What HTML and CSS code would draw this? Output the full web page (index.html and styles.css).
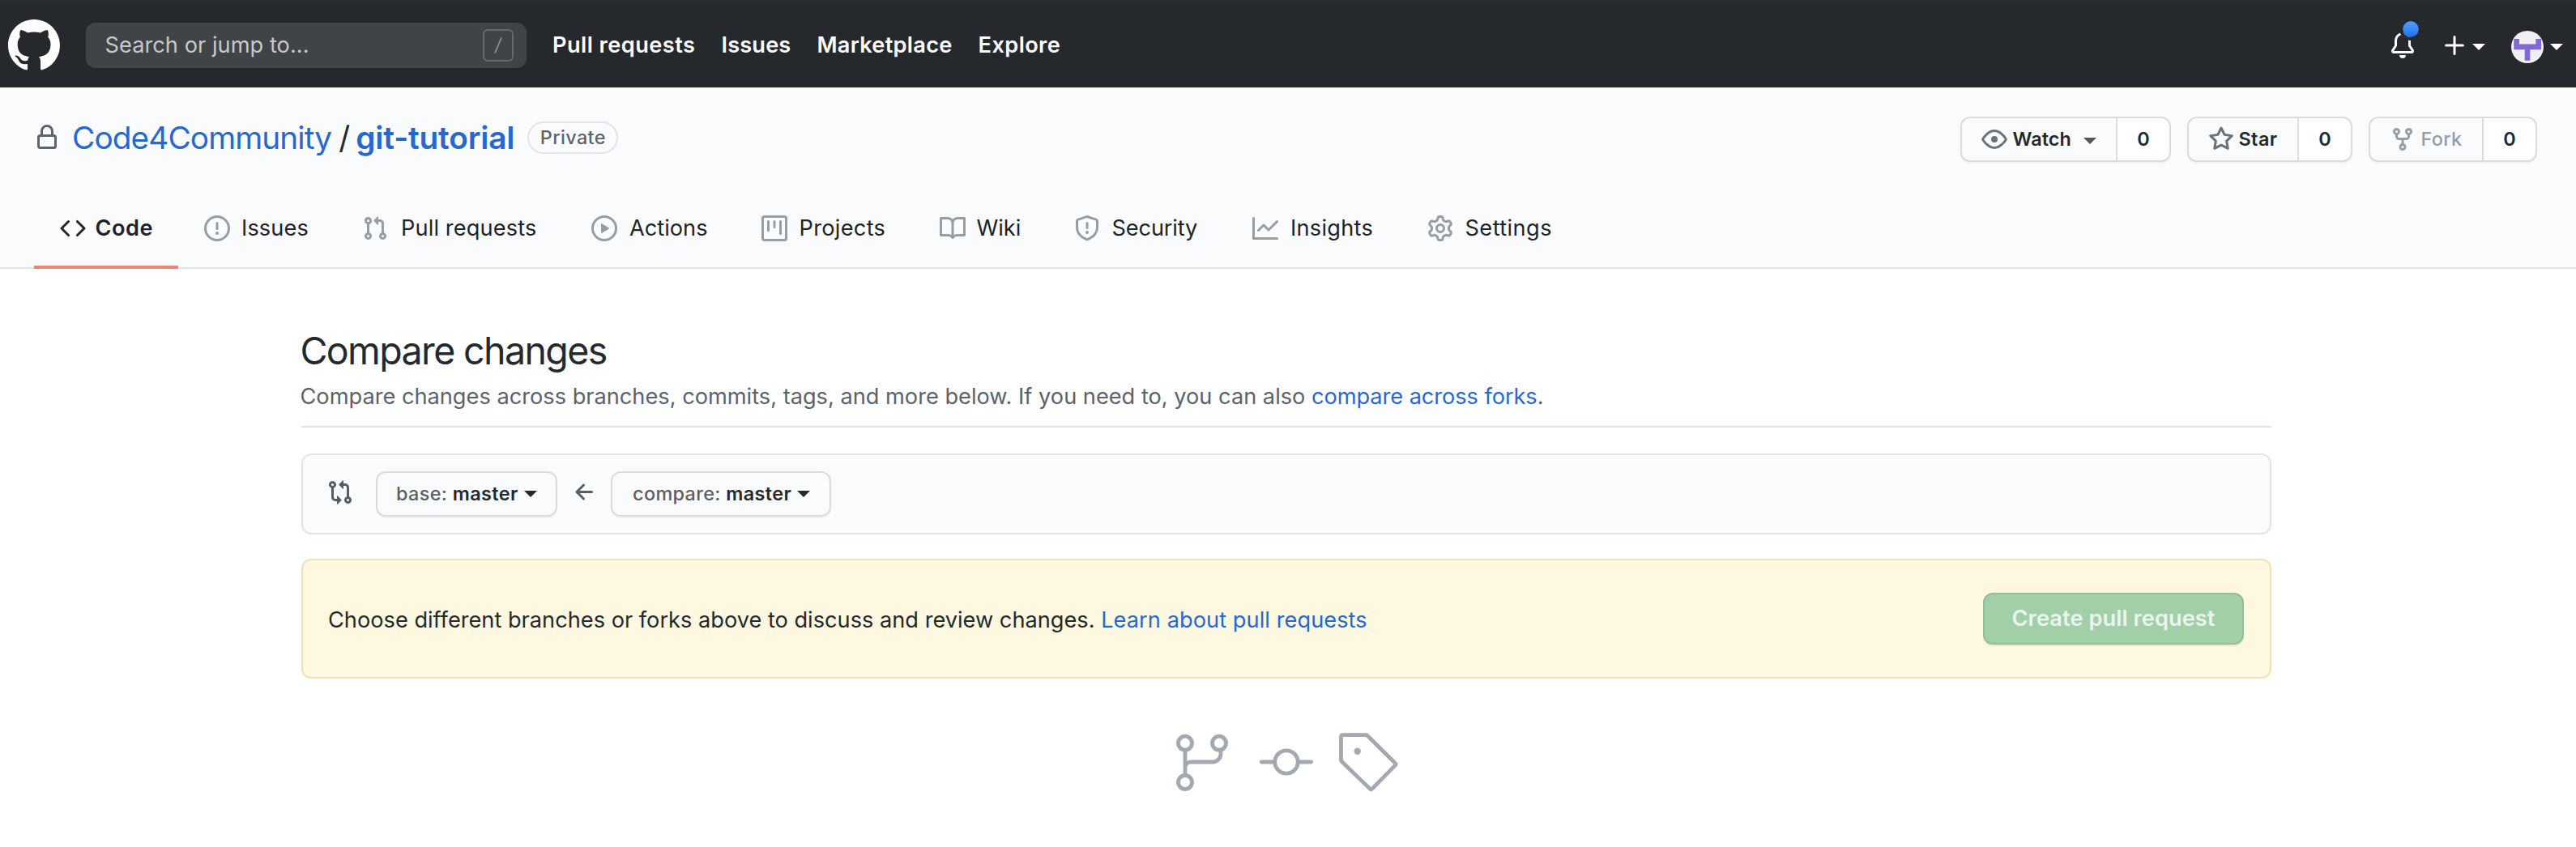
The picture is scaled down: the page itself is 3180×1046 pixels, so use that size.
FILE: index.html
```html
<!DOCTYPE html>
<html lang="en">
<head>
<meta charset="utf-8">
<title>Comparing master...master · Code4Community/git-tutorial</title>
<link rel="stylesheet" href="styles.css">
</head>
<body>
<header class="topbar">
  <a class="logo"><svg width="64" height="64" viewBox="0 0 16 16"><path d="M8 0C3.58 0 0 3.58 0 8c0 3.54 2.29 6.53 5.47 7.59.4.07.55-.17.55-.38 0-.19-.01-.82-.01-1.49-2.01.37-2.53-.49-2.69-.94-.09-.23-.48-.94-.82-1.13-.28-.15-.68-.52-.01-.53.63-.01 1.08.58 1.23.82.72 1.21 1.87.87 2.33.66.07-.52.28-.87.51-1.07-1.78-.2-3.64-.89-3.64-3.95 0-.87.31-1.59.82-2.15-.08-.2-.36-1.02.08-2.12 0 0 .67-.21 2.2.82.64-.18 1.32-.27 2-.27.68 0 1.36.09 2 .27 1.53-1.04 2.2-.82 2.2-.82.44 1.1.16 1.92.08 2.12.51.56.82 1.27.82 2.15 0 3.07-1.87 3.75-3.65 3.95.29.25.54.73.54 1.48 0 1.07-.01 1.93-.01 2.2 0 .21.15.46.55.38A8.013 8.013 0 0016 8c0-4.42-3.58-8-8-8z"/></svg></a>
  <div class="search">
    <span class="search-text">Search or jump to...</span>
    <span class="slash-key"><svg width="14" height="24" viewBox="0 0 14 24"><path d="M3 21.5 11 2.5" fill="none" stroke="currentColor" stroke-width="1.9"/></svg></span>
  </div>
  <nav class="topnav">
    <a class="nav-pulls">Pull requests</a>
    <a class="nav-issues">Issues</a>
    <a class="nav-market">Marketplace</a>
    <a class="nav-explore">Explore</a>
  </nav>
  <div class="top-actions">
    <a class="bell">
      <svg width="32" height="32" viewBox="0 0 16 16"><path d="M8 16a2 2 0 001.985-1.75c.017-.137-.097-.25-.235-.25h-3.5c-.138 0-.252.113-.235.25A2 2 0 008 16z"/><path fill-rule="evenodd" d="M8 1.5A3.5 3.5 0 004.5 5v2.947c0 .346-.102.683-.294.97l-1.703 2.556a.018.018 0 00-.003.01l.001.006c0 .002.002.004.004.006a.017.017 0 00.006.004l.007.001h10.964l.007-.001a.016.016 0 00.006-.004.016.016 0 00.004-.006l.001-.007a.017.017 0 00-.003-.01l-1.703-2.554a1.75 1.75 0 01-.294-.97V5A3.5 3.5 0 008 1.5zM3 5a5 5 0 0110 0v2.947c0 .05.015.098.042.139l1.703 2.555A1.518 1.518 0 0113.482 13H2.518a1.518 1.518 0 01-1.263-2.36l1.703-2.554A.25.25 0 003 7.947V5z"/></svg>
      <span class="unread"></span>
    </a>
    <a class="add-menu">
      <svg width="24" height="24" viewBox="0 0 24 24"><path d="M12 1.6V22.4M1.6 12H22.4" fill="none" stroke="currentColor" stroke-width="3" stroke-linecap="round"/></svg>
      <span class="caret"></span>
    </a>
    <a class="user-menu">
      <svg width="40" height="40" viewBox="0 0 40 40"><circle cx="20" cy="20" r="20" fill="#f0f0f0"/><path d="M3.3 10H10v6.6h20.3V10H37v13.3H23.3v13.4h-6.6V23.3H3.3z" fill="#8267d8"/></svg>
      <span class="caret"></span>
    </a>
  </div>
</header>

<section class="repohead">
  <div class="repo-row">
    <div class="repo-title">
      <svg class="lock" width="32" height="32" viewBox="0 0 16 16"><path fill-rule="evenodd" d="M4 4v2h-.25A1.75 1.75 0 002 7.75v5.5c0 .966.784 1.75 1.75 1.75h8.5A1.75 1.75 0 0014 13.25v-5.5A1.75 1.75 0 0012.25 6H12V4a4 4 0 10-8 0zm6.5 2V4a2.5 2.5 0 00-5 0v2h5zM12 7.5h.25a.25.25 0 01.25.25v5.5a.25.25 0 01-.25.25h-8.5a.25.25 0 01-.25-.25v-5.5a.25.25 0 01.25-.25H12z"/></svg>
      <a class="owner">Code4Community</a>
      <span class="sep">/</span>
      <a class="repo">git-tutorial</a>
      <span class="label">Private</span>
    </div>
    <div class="repo-buttons">
      <div class="btn-group watch">
        <span class="btn-main"><svg width="32" height="32" viewBox="0 0 16 16"><path fill-rule="evenodd" d="M1.679 7.932c.412-.621 1.242-1.75 2.366-2.717C5.175 4.242 6.527 3.5 8 3.5c1.473 0 2.824.742 3.955 1.715 1.124.967 1.954 2.096 2.366 2.717a.119.119 0 010 .136c-.412.621-1.242 1.75-2.366 2.717C10.825 11.758 9.473 12.5 8 12.5c-1.473 0-2.824-.742-3.955-1.715C2.92 9.818 2.09 8.69 1.679 8.068a.119.119 0 010-.136zM8 2c-1.981 0-3.67.992-4.933 2.078C1.797 5.169.88 6.423.43 7.1a1.619 1.619 0 000 1.798c.45.678 1.367 1.932 2.637 3.024C4.329 13.008 6.019 14 8 14c1.981 0 3.67-.992 4.933-2.078 1.27-1.091 2.187-2.345 2.637-3.023a1.619 1.619 0 000-1.798c-.45-.678-1.367-1.932-2.637-3.023C11.671 2.992 9.981 2 8 2zm0 8a2 2 0 100-4 2 2 0 000 4z"/></svg><span class="btn-text">Watch</span><span class="caret"></span></span>
        <span class="count">0</span>
      </div>
      <div class="btn-group star">
        <span class="btn-main"><svg width="32" height="32" viewBox="0 0 16 16"><path fill-rule="evenodd" d="M8 .25a.75.75 0 01.673.418l1.882 3.815 4.21.612a.75.75 0 01.416 1.279l-3.046 2.97.719 4.192a.75.75 0 01-1.088.791L8 12.347l-3.766 1.98a.75.75 0 01-1.088-.79l.72-4.194L.818 6.374a.75.75 0 01.416-1.28l4.21-.611L7.327.668A.75.75 0 018 .25zm0 2.445L6.615 5.5a.75.75 0 01-.564.41l-3.097.45 2.24 2.184a.75.75 0 01.216.664l-.528 3.084 2.769-1.456a.75.75 0 01.698 0l2.77 1.456-.53-3.084a.75.75 0 01.216-.664l2.24-2.183-3.096-.45a.75.75 0 01-.564-.41L8 2.694v.001z"/></svg><span class="btn-text">Star</span></span>
        <span class="count">0</span>
      </div>
      <div class="btn-group fork">
        <span class="btn-main"><svg width="32" height="32" viewBox="0 0 16 16"><path fill-rule="evenodd" d="M5 3.25a.75.75 0 11-1.5 0 .75.75 0 011.5 0zm0 2.122a2.25 2.25 0 10-1.5 0v.878A2.25 2.25 0 005.75 8.5h1.5v2.128a2.251 2.251 0 101.5 0V8.5h1.5a2.25 2.25 0 002.25-2.25v-.878a2.25 2.25 0 10-1.5 0v.878a.75.75 0 01-.75.75h-4.5A.75.75 0 015 6.25v-.878zm3.75 7.378a.75.75 0 11-1.5 0 .75.75 0 011.5 0zm3-8.75a.75.75 0 100-1.5.75.75 0 000 1.5z"/></svg><span class="btn-text">Fork</span></span>
        <span class="count">0</span>
      </div>
    </div>
  </div>
  <nav class="tabs">
    <a class="tab tab-code"><svg width="32" height="32" viewBox="0 0 16 16"><path d="M4.72 3.22a.75.75 0 011.06 1.06L2.06 8l3.72 3.72a.75.75 0 11-1.06 1.06L.47 8.53a.75.75 0 010-1.06l4.25-4.25zm6.56 0a.75.75 0 10-1.06 1.06L13.94 8l-3.72 3.72a.75.75 0 101.06 1.06l4.25-4.25a.75.75 0 000-1.06l-4.25-4.25z"/></svg><span>Code</span></a>
    <a class="tab tab-issues"><svg width="32" height="32" viewBox="0 0 16 16"><circle cx="8" cy="8" r="7.25" fill="none" stroke="currentColor" stroke-width="1.5"/><path d="M8 4.75v3.5" stroke="currentColor" stroke-width="1.5" stroke-linecap="round"/><circle cx="8" cy="11" r="1"/></svg><span>Issues</span></a>
    <a class="tab tab-pulls"><svg width="32" height="32" viewBox="0 0 16 16"><path fill-rule="evenodd" d="M7.177 3.073L9.573.677A.25.25 0 0110 .854v4.792a.25.25 0 01-.427.177L7.177 3.427a.25.25 0 010-.354zM3.75 2.5a.75.75 0 100 1.5.75.75 0 000-1.5zm-2.25.75a2.25 2.25 0 113 2.122v5.256a2.251 2.251 0 11-1.5 0V5.372A2.25 2.25 0 011.5 3.25zM11 2.5h-1V4h1a1 1 0 011 1v5.628a2.251 2.251 0 101.5 0V5A2.5 2.5 0 0011 2.5zm1 10.25a.75.75 0 111.5 0 .75.75 0 01-1.5 0zM3.75 12a.75.75 0 100 1.5.75.75 0 000-1.5z"/></svg><span>Pull requests</span></a>
    <a class="tab tab-actions"><svg width="32" height="32" viewBox="0 0 16 16"><circle cx="8" cy="8" r="7.25" fill="none" stroke="currentColor" stroke-width="1.5"/><path d="M6 5.2v5.6a.25.25 0 00.38.22l4.5-2.8a.25.25 0 000-.43l-4.5-2.8A.25.25 0 006 5.2z"/></svg><span>Actions</span></a>
    <a class="tab tab-projects"><svg width="32" height="32" viewBox="0 0 16 16"><path fill-rule="evenodd" d="M1.75 0A1.75 1.75 0 000 1.75v12.5C0 15.216.784 16 1.75 16h12.5A1.75 1.75 0 0016 14.25V1.75A1.75 1.75 0 0014.25 0H1.75zM1.5 1.75a.25.25 0 01.25-.25h12.5a.25.25 0 01.25.25v12.5a.25.25 0 01-.25.25H1.75a.25.25 0 01-.25-.25V1.75zM11.75 3a.75.75 0 00-.75.75v7.5a.75.75 0 001.5 0v-7.5a.75.75 0 00-.75-.75zm-8.25.75a.75.75 0 011.5 0v5.5a.75.75 0 01-1.5 0v-5.5zM8 3a.75.75 0 00-.75.75v3.5a.75.75 0 001.5 0v-3.5A.75.75 0 008 3z"/></svg><span>Projects</span></a>
    <a class="tab tab-wiki"><svg width="32" height="32" viewBox="0 0 16 16"><path fill-rule="evenodd" d="M0 1.75A.75.75 0 01.75 1h4.253c1.227 0 2.317.59 3 1.501A3.744 3.744 0 0111.006 1h4.245a.75.75 0 01.75.75v10.5a.75.75 0 01-.75.75h-4.507a2.25 2.25 0 00-1.591.659l-.622.621a.75.75 0 01-1.06 0l-.622-.621A2.25 2.25 0 005.258 13H.75a.75.75 0 01-.75-.75V1.75zm8.755 3a2.25 2.25 0 012.25-2.25H14.5v9h-3.757c-.71 0-1.4.201-1.992.572l.004-7.322zm-1.504 7.324l.004-5.073-.002-2.253A2.25 2.25 0 005.003 2.5H1.5v9h3.757a3.75 3.75 0 011.994.574z"/></svg><span>Wiki</span></a>
    <a class="tab tab-security"><svg width="32" height="32" viewBox="0 0 16 16"><path fill-rule="evenodd" d="M7.467.133a1.75 1.75 0 011.066 0l5.25 1.68A1.75 1.75 0 0115 3.48V7c0 1.566-.32 3.182-1.303 4.682-.983 1.498-2.585 2.813-5.032 3.855a1.7 1.7 0 01-1.33 0c-2.447-1.042-4.049-2.357-5.032-3.855C1.32 10.182 1 8.566 1 7V3.48a1.75 1.75 0 011.217-1.667l5.25-1.68zm.61 1.429a.25.25 0 00-.153 0l-5.25 1.68a.25.25 0 00-.174.238V7c0 1.358.275 2.666 1.057 3.86.784 1.194 2.121 2.34 4.366 3.297a.2.2 0 00.154 0c2.245-.956 3.582-2.104 4.366-3.298C13.225 9.666 13.5 8.36 13.5 7V3.48a.25.25 0 00-.174-.237l-5.25-1.68zM9 10.5a1 1 0 11-2 0 1 1 0 012 0zm-.25-5.75a.75.75 0 10-1.5 0v3a.75.75 0 001.5 0v-3z"/></svg><span>Security</span></a>
    <a class="tab tab-insights"><svg width="32" height="32" viewBox="0 0 16 16"><path d="M1.5 1.75a.75.75 0 00-1.5 0v12.5c0 .414.336.75.75.75h14.5a.75.75 0 000-1.5H1.5V1.75zm14.28 2.53a.75.75 0 00-1.06-1.06L10 7.94 7.53 5.47a.75.75 0 00-1.06 0L3.22 8.72a.75.75 0 001.06 1.06L7 7.06l2.47 2.47a.75.75 0 001.06 0l5.25-5.25z"/></svg><span>Insights</span></a>
    <a class="tab tab-settings"><svg width="32" height="32" viewBox="0 0 16 16"><path fill-rule="evenodd" d="M7.429 1.525a6.593 6.593 0 011.142 0c.036.003.108.036.137.146l.289 1.105c.147.56.55.967.997 1.189.174.086.341.183.501.29.417.278.97.423 1.53.27l1.102-.303c.11-.03.175.016.195.046.219.31.41.641.573.989.014.031.022.11-.059.19l-.815.806c-.411.406-.562.957-.53 1.456a4.588 4.588 0 010 .582c-.032.499.119 1.05.53 1.456l.815.806c.08.08.073.159.059.19a6.494 6.494 0 01-.573.99c-.02.029-.086.074-.195.045l-1.103-.303c-.559-.153-1.112-.008-1.529.27-.16.107-.327.204-.5.29-.449.222-.851.628-.998 1.189l-.289 1.105c-.029.11-.101.143-.137.146a6.613 6.613 0 01-1.142 0c-.036-.003-.108-.037-.137-.146l-.289-1.105c-.147-.56-.55-.967-.997-1.189a4.502 4.502 0 01-.501-.29c-.417-.278-.97-.423-1.53-.27l-1.102.303c-.11.03-.175-.016-.195-.046a6.492 6.492 0 01-.573-.989c-.014-.031-.022-.11.059-.19l.815-.806c.411-.406.562-.957.53-1.456a4.587 4.587 0 010-.582c.032-.499-.119-1.05-.53-1.456l-.815-.806c-.08-.08-.073-.159-.059-.19a6.44 6.44 0 01.573-.99c.02-.029.086-.075.195-.045l1.103.303c.559.153 1.112.008 1.529-.27.16-.107.327-.204.5-.29.449-.222.851-.628.998-1.189l.289-1.105c.029-.11.101-.143.137-.146zM8 0c-.236 0-.47.01-.701.03-.743.065-1.29.615-1.458 1.261l-.29 1.106c-.017.066-.078.158-.211.224a5.994 5.994 0 00-.668.386c-.123.082-.233.09-.3.071L3.27 2.776c-.644-.177-1.392.02-1.82.63a7.977 7.977 0 00-.704 1.217c-.315.675-.111 1.422.363 1.891l.815.806c.05.048.098.147.088.294a6.084 6.084 0 000 .772c.01.147-.038.246-.088.294l-.815.806c-.474.469-.678 1.216-.363 1.891.2.428.436.835.704 1.218.428.609 1.176.806 1.82.63l1.103-.303c.066-.019.176-.011.299.071.213.143.436.272.668.386.133.066.194.158.212.224l.289 1.106c.169.646.715 1.196 1.458 1.26a8.094 8.094 0 001.402 0c.743-.064 1.29-.614 1.458-1.26l.29-1.106c.017-.066.078-.158.211-.224a5.98 5.98 0 00.668-.386c.123-.082.233-.09.3-.071l1.102.302c.644.177 1.392-.02 1.82-.63.268-.382.505-.789.704-1.217.315-.675.111-1.422-.364-1.891l-.814-.806c-.05-.048-.098-.147-.088-.294a6.1 6.1 0 000-.772c-.01-.147.039-.246.088-.294l.814-.806c.475-.469.679-1.216.364-1.891a7.992 7.992 0 00-.704-1.218c-.428-.609-1.176-.806-1.82-.63l-1.103.303c-.066.019-.176.011-.299-.071a5.991 5.991 0 00-.668-.386c-.133-.066-.194-.158-.212-.224L10.16 1.29C9.99.645 9.444.095 8.701.031A8.094 8.094 0 008 0zm1.5 8a1.5 1.5 0 11-3 0 1.5 1.5 0 013 0zM11 8a3 3 0 11-6 0 3 3 0 016 0z"/></svg><span>Settings</span></a>
  </nav>
</section>

<main class="content">
  <div class="subhead">
    <h1>Compare changes</h1>
    <p>Compare changes across branches, commits, tags, and more below. If you need to, you can also <a>compare across forks</a>.</p>
  </div>

  <div class="range">
    <svg class="range-icon" width="32" height="32" viewBox="0 0 16 16"><path fill-rule="evenodd" d="M9.573.677L7.177 3.073a.25.25 0 000 .354l2.396 2.396A.25.25 0 0010 5.646V4h1a1 1 0 011 1v5.628a2.251 2.251 0 101.5 0V5A2.5 2.5 0 0011 2.5h-1V.854a.25.25 0 00-.427-.177zM6 12v-1.646a.25.25 0 01.427-.177l2.396 2.396a.25.25 0 010 .354l-2.396 2.396A.25.25 0 016 15.146V13.5H5A2.5 2.5 0 012.5 11V5.372a2.25 2.25 0 111.5 0V11a1 1 0 001 1h1zm6.75 0a.75.75 0 100 1.5.75.75 0 000-1.5zM4 3.25a.75.75 0 11-1.5 0 .75.75 0 011.5 0z"/></svg>
    <button class="ref base"><span class="ref-kind">base:</span><span class="ref-name">master</span><span class="caret"></span></button>
    <svg class="arrow" width="32" height="32" viewBox="0 0 16 16"><path d="M7.78 12.53a.75.75 0 01-1.06 0L2.47 8.28a.75.75 0 010-1.06l4.25-4.25a.75.75 0 011.06 1.06L4.81 7h7.44a.75.75 0 010 1.5H4.81l2.97 2.97a.75.75 0 010 1.06z"/></svg>
    <button class="ref head"><span class="ref-kind">compare:</span><span class="ref-name">master</span><span class="caret"></span></button>
  </div>

  <div class="notice">
    <p>Choose different branches or forks above to discuss and review changes. <a>Learn about pull requests</a></p>
    <button class="create" disabled>Create pull request</button>
  </div>

  <div class="blank-icons">
    <svg width="65" height="74" viewBox="0 0 65 74"><circle cx="11" cy="12.7" r="8.5"/><circle cx="53" cy="12.7" r="8.5"/><circle cx="11" cy="61" r="8.5"/><path d="M11 21.5V52M55 21.5V26a10 10 0 0 1-10 10H18a7 7 0 0 0-7 7"/></svg>
    <svg width="66" height="74" viewBox="0 0 66 74"><circle cx="33" cy="36" r="14.2"/><path d="M2.4 36H18M48 36h15.6"/></svg>
    <svg width="74" height="74" viewBox="0 0 74 74"><path d="M5.5 2.7H34.5a1.8 1.8 0 0 1 1.3.6L70.6 37.7a1.4 1.4 0 0 1 0 2.2L41.6 69.4a1.5 1.5 0 0 1-2.2 0L4.1 35.2a1.8 1.8 0 0 1-.6-1.3V4.5a1.8 1.8 0 0 1 2-1.8z"/><circle class="dot" cx="23.7" cy="22.7" r="4.2"/></svg>
  </div>
</main>
</body>
</html>
```
FILE: styles.css
```css
* { box-sizing: border-box; }
body {
  margin: 0;
  background: #fff;
  color: #24292e;
  font: 400 27.2px/42px Inter, "Liberation Sans", sans-serif;
}
svg { display: block; flex: none; fill: currentColor; }
h1, p { margin: 0; }
a { color: #2768cf; text-decoration: none; white-space: nowrap; }
button { font: inherit; margin: 0; padding: 0; }
.caret {
  flex: none;
  width: 0;
  height: 0;
  border: 8px solid transparent;
  border-top-color: currentColor;
  border-bottom: 0;
}

/* Top bar */
.topbar {
  display: flex;
  align-items: center;
  height: 108px;
  padding: 4px 16px 0 10px;
  background: #25292e;
  box-shadow: inset 0 3px 0 #2a2a2a;
  color: #fff;
}
.topbar a { color: #fff; }
.search {
  display: flex;
  align-items: center;
  justify-content: space-between;
  width: 544px;
  height: 56px;
  margin-left: 32px;
  padding: 0 16px 0 23.5px;
  border-radius: 12px;
  background: #404448;
}
.search-text { color: #c8c9cb; letter-spacing: .04px; }
.slash-key {
  display: flex;
  align-items: center;
  justify-content: center;
  width: 38px;
  height: 40px;
  border: 2px solid #65696c;
  border-radius: 6px;
  color: #8b8e91;
}
.topnav { display: flex; gap: 32px; margin-left: 32px; font-weight: 600; }
.nav-pulls { letter-spacing: .46px; }
.nav-issues { letter-spacing: .16px; }
.nav-market { letter-spacing: .28px; }
.nav-explore { letter-spacing: .39px; }
.top-actions { display: flex; align-items: center; margin-left: auto; }
.bell { position: relative; }
.unread {
  position: absolute;
  left: 12px;
  top: -18px;
  width: 28px;
  height: 28px;
  border: 4px solid #25292e;
  border-radius: 50%;
  background: linear-gradient(#54a0ff, #1f6feb) padding-box;
}
.add-menu { display: flex; align-items: center; gap: 10px; margin-left: 36px; }
.add-menu .caret, .user-menu .caret { position: relative; top: 2px; }
.user-menu { display: flex; align-items: center; gap: 8px; margin-left: 32px; }
.user-menu svg { margin-top: 4px; }

/* Repository header */
.repohead { height: 224px; background: #fafbfd; border-bottom: 2px solid #e1e4e8; }
.repo-row { display: flex; justify-content: space-between; height: 124px; padding: 36px 48px 0 42px; }
.repo-title { display: flex; align-items: center; height: 52px; font-size: 38.8px; }
.lock { color: #5d646c; }
.owner { margin-left: 15px; letter-spacing: -.92px; }
.sep { margin-left: 9px; }
.repo { margin-left: 7px; font-weight: 600; letter-spacing: -.18px; }
.label {
  display: flex;
  align-items: center;
  justify-content: center;
  width: 112px;
  height: 40px;
  margin-left: 16px;
  border: 2px solid #e1e4e8;
  border-radius: 20px;
  color: #5d646c;
  font-size: 23.4px;
  font-weight: 500;
  letter-spacing: .41px;
}
.repo-buttons { display: flex; gap: 20px; font-size: 23.4px; font-weight: 600; }
.btn-group {
  display: flex;
  height: 56px;
  border: 2px solid #d9dbdd;
  border-radius: 12px;
  background: #fff;
  box-shadow: 0 2px 0 rgba(27, 31, 35, .04);
  overflow: hidden;
}
.watch { width: 260px; }
.star { width: 204px; }
.fork { width: 208px; }
.btn-main {
  display: flex;
  align-items: center;
  padding-left: 24px;
  border-right: 2px solid #d9dbdd;
  background: #fafbfc;
}
.watch .btn-main { width: 192px; }
.star .btn-main { width: 136px; }
.fork .btn-main { width: 140px; color: #959da5; font-weight: 500; }
.btn-main svg { color: #6a737d; }
.fork svg { color: #959da5; }
.btn-text { margin-left: 6.5px; letter-spacing: .1px; }
.star .btn-text { margin-left: 5.5px; letter-spacing: .4px; }
.fork .btn-text { letter-spacing: .34px; }
.btn-main .caret { margin: 4px 0 0 15px; color: #555658; }
.count { flex: 1; display: flex; align-items: center; justify-content: center; }

.tabs { display: flex; height: 100px; padding-left: 42px; }
.tab {
  display: flex;
  align-items: center;
  gap: 15px;
  padding-left: 32px;
  color: #1f2328;
  letter-spacing: .1px;
}
.tab svg { color: #959da5; }
.tab-code { width: 178px; gap: 11.5px; border-bottom: 4px solid #ec8571; padding-top: 4px; font-weight: 600; letter-spacing: .45px; }
.tab-code svg { color: #24292e; }
.tab-issues { width: 195px; gap: 14px; }
.tab-pulls { width: 283px; gap: 16px; letter-spacing: .12px; }
.tab-actions { width: 210px; gap: 15px; letter-spacing: 0; }
.tab-projects { width: 220px; gap: 14.5px; letter-spacing: .29px; }
.tab-wiki { width: 166px; gap: 13.5px; letter-spacing: 0; }
.tab-security { width: 220px; gap: 14.5px; letter-spacing: -.15px; }
.tab-insights { width: 215.5px; letter-spacing: .25px; }
.tab-settings { letter-spacing: .42px; }

/* Compare page */
.content { padding: 76px 376px 0 372px; }
.subhead { height: 120px; border-bottom: 2px solid #e1e4e8; }
.subhead h1 { font-size: 46.5px; font-weight: 400; line-height: 50px; letter-spacing: -1.62px; margin-left: -1.5px; }
.subhead p { margin: 11px 0 0 -1.5px; color: #5a626b; }
.subhead a { letter-spacing: -.06px; }
.range {
  display: flex;
  align-items: center;
  height: 100px;
  margin-top: 32px;
  padding-left: 30px;
  border: 2px solid #e1e4e8;
  border-radius: 12px;
  background: #fafbfd;
  color: #555e67;
}
.range-icon { margin-top: -4px; }
.arrow { margin: -5px 0 0 17.5px; }
.ref {
  display: flex;
  align-items: center;
  height: 56px;
  padding-left: 23px;
  border: 2px solid #d9dbdd;
  border-radius: 12px;
  background: #fafbfc;
  box-shadow: 0 2px 0 rgba(27, 31, 35, .04);
  color: #24292e;
  font-size: 23.4px;
  letter-spacing: .38px;
}
.ref-kind { color: #5b5f63; font-weight: 500; }
.ref-name { margin: 0 7px 0 6.5px; font-weight: 600; }
.base { width: 224px; margin-left: 28px; }
.head { width: 272px; margin-left: 16.5px; padding-left: 25px; }
.notice {
  display: flex;
  align-items: center;
  justify-content: space-between;
  height: 148px;
  margin-top: 30px;
  padding: 0 32px 0 31px;
  border: 2px solid #ede2b5;
  border-radius: 12px;
  background: #fef8e0;
}
.notice p { padding-top: 4px; }
.notice a { letter-spacing: .06px; }
.create {
  width: 322px;
  height: 64px;
  border: 2px solid #94bd9b;
  border-radius: 12px;
  background: #a1d0a8;
  box-shadow: 0 2px 0 rgba(27, 31, 35, .08);
  color: #ebf5ed;
  font-weight: 600;
  letter-spacing: .07px;
}
.blank-icons {
  display: flex;
  margin: 67px 0 0 1080px;
  color: #a3a9b0;
}
.blank-icons svg {
  fill: none;
  stroke: currentColor;
  stroke-width: 4.8;
  stroke-linecap: round;
  stroke-linejoin: round;
}
.blank-icons svg + svg { margin-left: 38px; }
.blank-icons svg:last-child { margin-left: 31px; }
.blank-icons .dot { fill: currentColor; stroke: none; }
```
